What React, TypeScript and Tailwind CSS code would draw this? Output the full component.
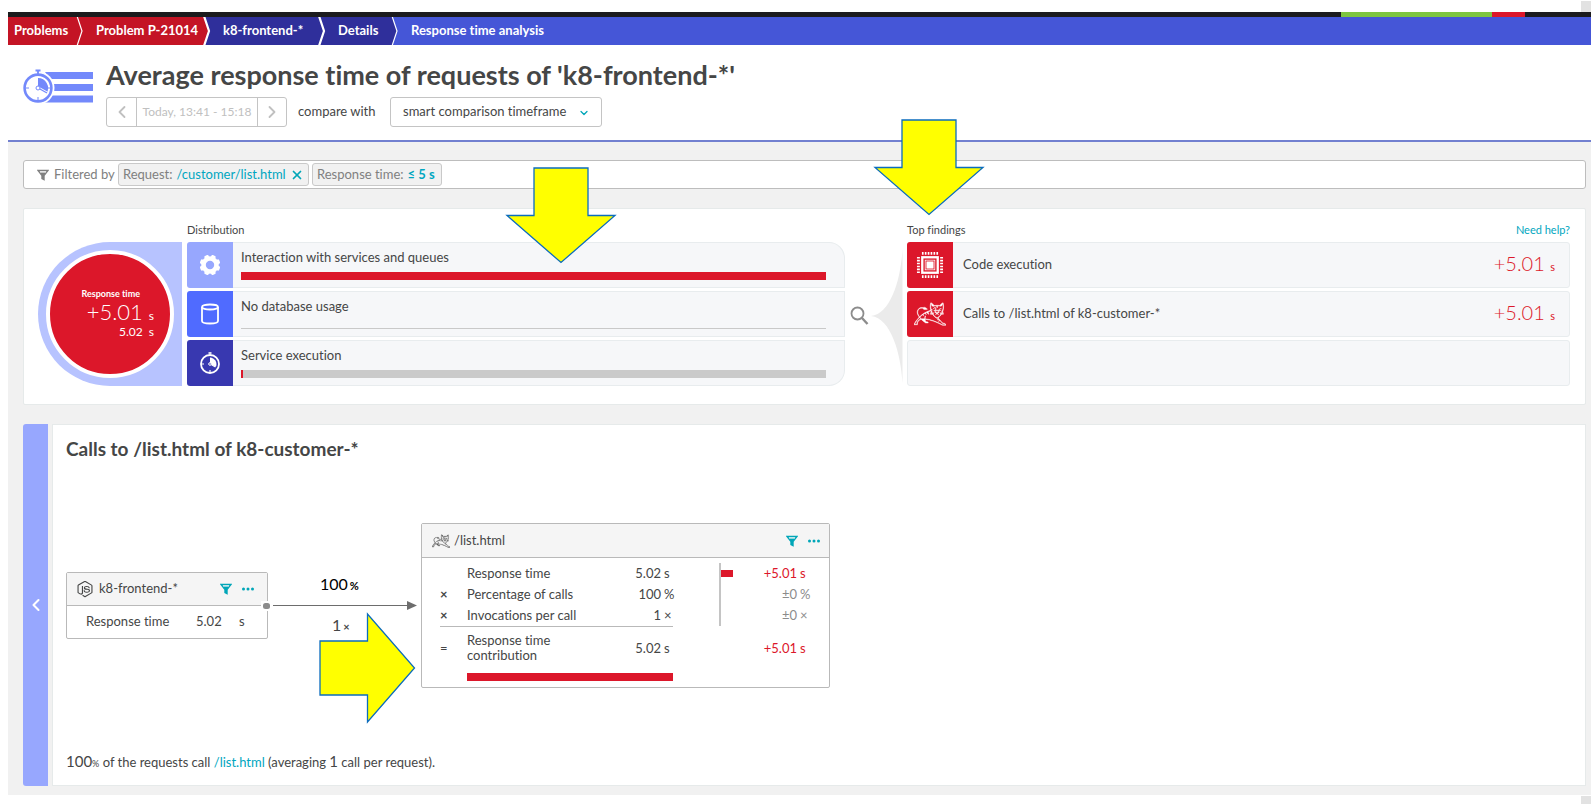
import type { ReactNode } from "react";
import { ChevronDown, ChevronLeft, ChevronRight, X } from "lucide-react";
import { LiaNodeJs } from "react-icons/lia";
import { SiApachetomcat } from "react-icons/si";

function Separator({ left, right, width }: { left: string; right: string; width: number }) {
  return (
    <svg className="h-7 w-2 shrink-0" viewBox="0 0 8 28" aria-hidden="true">
      <rect width="8" height="28" fill={right} />
      <path d="M0 0H1L6 14L1 28H0Z" fill={left} />
      <path d="M1 -1L6 14L1 29" fill="none" stroke="#fff" strokeWidth={width} />
    </svg>
  );
}

function Breadcrumbs() {
  return (
    <nav aria-label="Breadcrumb" className="flex h-7 bg-[#4556d7] text-[13px] leading-[26px] font-bold text-white">
      <a href="#problems" className="w-[68px] bg-[#c41425] pl-1.5">Problems</a>
      <Separator left="#c41425" right="#c41425" width={1.2} />
      <a href="#problem" className="w-[119px] bg-[#c41425] pl-3">Problem P-21014</a>
      <Separator left="#c41425" right="#2f2f9b" width={2.2} />
      <a href="#service" className="w-[107px] bg-[#2f2f9b] pl-3">k8-frontend-*</a>
      <Separator left="#2f2f9b" right="#2f2f9b" width={2.2} />
      <a href="#details" className="w-[65px] bg-[#2f2f9b] pl-3">Details</a>
      <Separator left="#2f2f9b" right="#4556d7" width={1.2} />
      <a href="#analysis" className="pl-3">Response time analysis</a>
    </nav>
  );
}

function Stopwatch() {
  return (
    <svg className="size-[22px]" viewBox="0 0 22 22" fill="none" stroke="#fff" aria-hidden="true">
      <path d="M9.5 1H12.5" strokeWidth="1.6" />
      <circle cx="11" cy="12" r="9" strokeWidth="1.8" />
      <path d="M11 5.500V12L17 14.800A6.800 6.800 0 0 0 11 5.500Z" fill="#fff" stroke="none" />
      <circle cx="11" cy="12" r="1.300" fill="#3838b0" strokeWidth="1" />
      <path d="M2.500 12H5M11 20.500V18M12.500 12.800L16.500 15" strokeWidth="1.200" />
    </svg>
  );
}

function HeaderIcon() {
  return (
    <svg className="mt-6 h-9 w-[70px] shrink-0 text-[#7389fb]" viewBox="0 0 70 36" fill="none" aria-hidden="true">
      <path d="M22 3H70V10H27ZM31 15H70V22H31ZM27 26.500H70V33.500H20Z" fill="currentColor" />
      <circle cx="15" cy="19" r="16.500" fill="#fff" />
      <circle cx="15" cy="19" r="13.400" stroke="currentColor" strokeWidth="2.600" />
      <path d="M12.500 1.500h5M15 1v5" stroke="currentColor" strokeWidth="1.800" />
      <path d="M15 9v10l8.700 5A10 10 0 0 0 15 9Z" fill="currentColor" />
      <path d="M16 19.500l8 4.500" stroke="#fff" strokeWidth="3" />
      <path d="M16 19.500l8 4.500" stroke="currentColor" strokeWidth="1.300" />
      <circle cx="15" cy="19" r="2" fill="#fff" stroke="currentColor" />
      <path d="M3 19h3M15 31v-3M24 19h3" stroke="currentColor" />
    </svg>
  );
}

function Funnel({ className }: { className: string }) {
  return (
    <svg className={className} viewBox="0 0 12 12" fill="none" stroke="currentColor" aria-hidden="true">
      <path d="M1 1.5H11L7 6.5V10.5L5 9.5V6.5Z" strokeWidth="1.4" />
      <path d="M3 3.2H9L7 6.5V10.5L5 9.5V6.5Z" fill="currentColor" stroke="none" />
      <path d="M3 3.2H9" strokeWidth="0.6" stroke="#fff" />
    </svg>
  );
}

function Gear() {
  const teeth = [22.5, 67.5, 112.5, 157.5, 202.5, 247.5, 292.5, 337.5];
  return (
    <svg className="size-[22px]" viewBox="0 0 22 22" fill="#fff" aria-hidden="true">
      {teeth.map((a) => (
        <rect key={a} x="8.7" y="0.7" width="4.6" height="5" rx="1.2" transform={`rotate(${a} 11 11)`} />
      ))}
      <circle cx="11" cy="11" r="6.5" fill="none" stroke="#fff" strokeWidth="4.600" />
    </svg>
  );
}

function Database() {
  return (
    <svg className="size-[22px]" viewBox="0 0 22 22" fill="none" stroke="#fff" strokeWidth="1.8" aria-hidden="true">
      <ellipse cx="11" cy="4" rx="8" ry="2.5" />
      <path d="M3 4V18c0 1.5 3.5 2.500 8 2.500s8-1 8-2.500V4" />
    </svg>
  );
}

function Processor() {
  const pins = [7, 10, 13, 16, 19, 22];
  return (
    <svg className="size-7" viewBox="0 0 29 29" fill="none" stroke="#fff" aria-hidden="true">
      <rect x="6.5" y="6.5" width="16" height="16" strokeWidth="2.4" />
      <rect x="9.5" y="9.5" width="10" height="10" strokeWidth="0.8" />
      <rect x="10.8" y="10.8" width="7.4" height="7.4" fill="#fff" stroke="none" />
      {pins.map((p) => (
        <path key={p} d={`M${p} 1v3M${p} 25v3M1 ${p}h3M25 ${p}h3`} strokeWidth="1.7" />
      ))}
    </svg>
  );
}

function DistributionRow({ label, icon, tile, rounding, children }: {
  label: string; icon: ReactNode; tile: string; rounding: string; children: ReactNode;
}) {
  return (
    <li className="flex h-[46px]">
      <span className={`flex w-[46px] shrink-0 items-center justify-center rounded-l-[3px] ${tile}`}>{icon}</span>
      <div className={`flex flex-1 flex-col border border-l-0 border-[#e8ecee] bg-[#f6f7f9] pr-[18px] pl-2 ${rounding}`}>
        <span className="h-[29px] pt-1 text-[13px] leading-5">{label}</span>
        {children}
      </div>
    </li>
  );
}

function FindingRow({ label, icon }: { label?: string; icon?: ReactNode }) {
  return (
    <li className="flex h-[46px] rounded-[3px] border border-[#e8ecee] bg-[#f6f7f9]">
      {label && (
        <>
          <span className="-my-px -ml-px flex w-[46px] shrink-0 items-center justify-center rounded-l-[3px] bg-[#dc172a] text-white">{icon}</span>
          <span className="flex-1 self-center pl-2.5 text-[13px]">{label}</span>
          <span className="self-center pr-3.5 text-xl leading-6 font-light text-[#dc172a]">
            +5.01 <span className="text-[11px] font-normal">s</span>
          </span>
        </>
      )}
    </li>
  );
}

function Overview() {
  return (
    <section className="flex h-[197px] rounded-[2px] border border-[#e6eaea] bg-white pr-[15px] pl-3.5">
      <div className="mt-[33px] flex h-36 w-36 shrink-0 items-center rounded-l-full bg-[#b7c3ff] pl-2">
        <div className="flex size-32 flex-col items-end justify-center rounded-full border-4 border-white bg-[#dc172a] pr-4 text-white">
          <span className="pr-3.5 text-[9px] leading-3 font-bold">Response time</span>
          <span className="text-[22px] leading-6 font-light">+5.01 <span className="text-xs font-normal">s</span></span>
          <span className="text-xs leading-4">5.02 &nbsp;s</span>
        </div>
      </div>
      <div className="ml-[5px] w-[658px] shrink-0">
        <h2 className="h-[33px] pt-[11px] text-[11px] leading-5">Distribution</h2>
        <ul className="flex flex-col gap-[3px]">
          <DistributionRow label="Interaction with services and queues" icon={<Gear />} tile="bg-[#97a7fe]" rounding="rounded-tr-2xl">
            <div className="h-2 bg-[#dc172a]" />
          </DistributionRow>
          <DistributionRow label="No database usage" icon={<Database />} tile="bg-[#506bff]" rounding="">
            <div className="mt-[7px] h-px bg-[#c9c9c9]" />
          </DistributionRow>
          <DistributionRow label="Service execution" icon={<Stopwatch />} tile="bg-[#3838b0]" rounding="rounded-br-2xl">
            <div className="h-2 border-l-2 border-[#dc172a] bg-[#cacaca]" />
          </DistributionRow>
        </ul>
      </div>
      <div className="w-[62px] shrink-0 pt-[33px] pl-1">
        <svg className="h-[150px] w-[58px]" viewBox="0 0 58 150" fill="none" aria-hidden="true">
          <circle cx="8.5" cy="71.5" r="6" stroke="#8c8c8c" strokeWidth="1.8" />
          <path d="M13 76L18.5 82" stroke="#8c8c8c" strokeWidth="2.4" />
          <path d="M22 74C42 72 52 36 53.5 7V141C52 112 42 76 22 74Z" fill="#ebebeb" />
        </svg>
      </div>
      <div className="flex-1">
        <div className="flex h-[33px] justify-between pt-[11px] text-[11px] leading-5">
          <h2>Top findings</h2>
          <a href="#help" className="text-[#00a6c0]">Need help?</a>
        </div>
        <ul className="flex flex-col gap-[3px]">
          <FindingRow label="Code execution" icon={<Processor />} />
          <FindingRow label="Calls to /list.html of k8-customer-*" icon={<SiApachetomcat className="size-8" stroke="currentColor" strokeWidth="0.3" />} />
          <FindingRow />
        </ul>
      </div>
    </section>
  );
}

function NodeActions() {
  return (
    <div className="flex items-center gap-[9px] text-[#00a6b8]">
      <button type="button" aria-label="Filter"><Funnel className="size-3" /></button>
      <button type="button" aria-label="More">
        <svg className="h-3 w-3.5" viewBox="0 0 14 12" fill="currentColor" aria-hidden="true">
          <circle cx="2.5" cy="6" r="1.5" /><circle cx="7" cy="6" r="1.5" /><circle cx="11.5" cy="6" r="1.5" />
        </svg>
      </button>
    </div>
  );
}

function SourceNode() {
  return (
    <article className="absolute top-[111px] left-0 w-[202px] rounded-[2px] border border-[#b9b9b9] bg-white text-[13px]">
      <header className="flex h-[33px] items-center border-b border-[#b9b9b9] bg-[#f5f5f5] pr-3 pl-2">
        <LiaNodeJs className="size-5" aria-hidden="true" />
        <h3 className="flex-1 pl-1">k8-frontend-*</h3>
        <NodeActions />
      </header>
      <dl className="flex h-8 items-center pl-[19px]">
        <dt className="w-[110px]">Response time</dt>
        <dd>5.02 <span className="pl-3.5">s</span></dd>
      </dl>
    </article>
  );
}

const metrics = [
  { op: "", name: "Response time", value: "5.02", unit: "s", delta: "+5.01", changed: true },
  { op: "×", name: "Percentage of calls", value: "100", unit: "%", delta: "±0", changed: false },
  { op: "×", name: "Invocations per call", value: "1", unit: "×", delta: "±0", changed: false },
];

function TargetNode() {
  return (
    <article className="absolute top-[62px] left-[355px] w-[409px] rounded-[2px] border border-[#b9b9b9] bg-white text-[13px]">
      <header className="flex h-[34px] items-center border-b border-[#b9b9b9] bg-[#f5f5f5] pr-2 pl-2.5">
        <SiApachetomcat className="size-[18px] text-[#5a5a5a]" stroke="currentColor" strokeWidth="0.3" aria-hidden="true" />
        <h3 className="flex-1 pl-1">/list.html</h3>
        <NodeActions />
      </header>
      <div className="h-[129px] pt-[5px] pl-[18px]">
        <table className="w-[380px] table-fixed border-collapse leading-[15px]">
          <colgroup>
            <col className="w-[27px]" /><col className="w-[130px]" /><col className="w-[64px]" /><col className="w-[12px]" />
            <col className="w-[47px]" /><col className="w-[21px]" /><col className="w-[56px]" /><col />
          </colgroup>
          <tbody>
            {metrics.map((m) => (
              <tr key={m.name} className="h-[21px]">
                <td className="font-bold">{m.op}</td>
                <th scope="row" className="text-left font-normal whitespace-nowrap">{m.name}</th>
                <td className="text-right">{m.value}</td>
                <td className="pl-[3px]">{m.unit}</td>
                <td className="border-r-2 border-[#c4c4c4]" />
                <td>{m.changed && <div className="h-[7px] w-3 bg-[#dc172a]" />}</td>
                <td className={m.changed ? "text-right text-[#dc172a]" : "text-right text-[#8c8c8c]"}>{m.delta}</td>
                <td className={m.changed ? "pl-[3px] text-[#dc172a]" : "pl-[3px] text-[#8c8c8c]"}>{m.unit}</td>
              </tr>
            ))}
            <tr className="h-10">
              <td className="border-t border-[#b9b9b9] pt-1">=</td>
              <th scope="row" className="border-t border-[#b9b9b9] pt-1 text-left font-normal">
                <span className="block w-[90px]">Response time contribution</span>
              </th>
              <td className="border-t border-[#b9b9b9] pt-1 text-right">5.02</td>
              <td className="border-t border-[#b9b9b9] pt-1 pl-[3px]">s</td>
              <td /><td />
              <td className="pt-1 text-right text-[#dc172a]">+5.01</td>
              <td className="pt-1 pl-[3px] text-[#dc172a]">s</td>
            </tr>
          </tbody>
        </table>
        <div className="mt-[7px] ml-[27px] h-2 w-[206px] bg-[#dc172a]" />
      </div>
    </article>
  );
}

function CallDetails() {
  return (
    <section className="flex gap-1">
      <button type="button" aria-label="Back" className="flex w-[25px] items-center justify-center rounded-l-[3px] bg-[#97a7fe] text-white">
        <ChevronLeft className="size-5" strokeWidth={2.5} />
      </button>
      <div className="flex-1 border border-[#e6eaea] bg-white pt-3 pb-3 pl-[13px]">
        <h2 className="text-[19px] leading-6 font-bold">Calls to /list.html of k8-customer-*</h2>
        <div className="relative h-[288px]">
          <SourceNode />
          <svg className="absolute top-[138px] left-[195px] h-3.5 w-[158px]" viewBox="0 0 158 14" fill="none" aria-hidden="true">
            <rect x="0" y="2" width="11" height="10" fill="#fff" />
            <rect x="2" y="4" width="7" height="6" rx="2.5" fill="#8c8c8c" />
            <path d="M12 6.5H148" stroke="#6d6d6d" />
            <path d="M146 2L156 6.500L146 11Z" fill="#6d6d6d" />
          </svg>
          <span className="absolute top-[111px] left-[254px] text-base leading-6 text-black">100<span className="pl-0.5 text-[11px] font-bold">%</span></span>
          <span className="absolute top-[152px] left-[266px] text-base leading-6">1<span className="pl-0.5 text-[11px] font-bold">×</span></span>
          <TargetNode />
        </div>
        <p className="h-6 text-[13px] leading-6">
          <span className="text-[15px]">100</span><span className="text-[9px]">%</span> of the requests call{" "}
          <a href="#list" className="text-[#00a6c0]">/list.html</a> (averaging <span className="text-[15px]">1</span> call per request).
        </p>
      </div>
    </section>
  );
}

function Header() {
  return (
    <header className="flex h-[97px] gap-[13px] border-b-2 border-[#7280d0] bg-white pl-[15px]">
      <HeaderIcon />
      <div className="pt-3.5">
        <h1 className="text-[27px] leading-8 font-bold">Average response time of requests of 'k8-frontend-*'</h1>
        <div className="mt-1.5 flex items-center text-[13px]">
          <div className="flex h-[30px] rounded-[3px] border border-[#c4c4c4] text-[#c0c0c0]">
            <button type="button" aria-label="Previous timeframe" className="flex w-[29px] items-center justify-center"><ChevronLeft className="size-5" strokeWidth={2.2} /></button>
            <button type="button" className="w-[122px] border-x border-[#c4c4c4] text-xs">Today, 13:41 - 15:18</button>
            <button type="button" aria-label="Next timeframe" className="flex w-[28px] items-center justify-center"><ChevronRight className="size-5" strokeWidth={2.2} /></button>
          </div>
          <label htmlFor="compare" className="w-[103px] pl-[11px]">compare with</label>
          <div className="relative">
            <select id="compare" className="h-[30px] w-[212px] appearance-none rounded-[3px] border border-[#c4c4c4] bg-white pl-3">
              <option>smart comparison timeframe</option>
            </select>
            <ChevronDown className="pointer-events-none absolute top-2.5 right-3 size-3 text-[#00a6b8]" strokeWidth={2.5} />
          </div>
        </div>
      </div>
    </header>
  );
}

function FilterBar() {
  return (
    <div className="flex h-[29px] items-center rounded-[3px] border border-[#bdbdbd] bg-white pl-[13px] text-[13px] text-[#808080]">
      <Funnel className="size-3" />
      <span className="w-[69px] pl-[5px]">Filtered by</span>
      <span className="flex h-[23px] w-[191px] items-center rounded-[3px] border border-[#c9c9c9] bg-[#f1f1f1] px-1">
        Request: <a href="#request" className="flex-1 pl-1 text-[#00a6c0]">/customer/list.html</a>
        <button type="button" aria-label="Remove filter" className="text-[#00a6b8]"><X className="size-3.5" strokeWidth={3} /></button>
      </span>
      <span className="ml-[3px] flex h-[23px] w-[130px] items-center rounded-[3px] border border-[#c9c9c9] bg-[#f1f1f1] px-1">
        Response time: <a href="#time" className="pl-1 font-bold text-[#00a6c0]">≤ 5 s</a>
      </span>
    </div>
  );
}

function DownArrow({ className }: { className: string }) {
  return (
    <svg className={className} viewBox="0 0 112 97" aria-hidden="true">
      <path d="M29 1H83V48.5H110L56 95.5L2 48.5H29Z" fill="#ffff00" stroke="#0b6cbd" strokeWidth="1.3" />
    </svg>
  );
}

export default function App() {
  return (
    <div className="relative bg-white pb-[9px] pl-2 font-[Lato,'Noto_Sans',sans-serif] text-[#454646] [font-variant-ligatures:none]">
      <div className="flex h-3 items-end justify-end"><span className="h-[11px] w-2.5 bg-[#e2e2e2]" /></div>
      <div className="flex h-[5px] justify-end bg-[#1b1b1d] pr-[66px]">
        <span className="w-[151px] bg-[#7dc540]" />
        <span className="w-[33px] bg-[#dc172a]" />
      </div>
      <Breadcrumbs />
      <Header />
      <main className="bg-[#f1f1f1] pt-[18px] pr-[5px] pb-[9px] pl-[15px]">
        <FilterBar />
        <div className="h-[19px]" />
        <Overview />
        <div className="h-[19px]" />
        <CallDetails />
      </main>
      <span className="absolute right-0 bottom-0 h-2 w-2.5 bg-[#e2e2e2]" />
      <DownArrow className="absolute top-[167px] left-[505px] h-[97px] w-28" />
      <DownArrow className="absolute top-[119px] left-[873px] h-[97px] w-28" />
      <svg className="absolute top-[612px] left-[319px] h-28 w-[97px]" viewBox="0 0 97 112" aria-hidden="true">
        <path d="M1 29H48.5V2L95.5 56L48.5 110V83H1Z" fill="#ffff00" stroke="#0b6cbd" strokeWidth="1.3" />
      </svg>
    </div>
  );
}
